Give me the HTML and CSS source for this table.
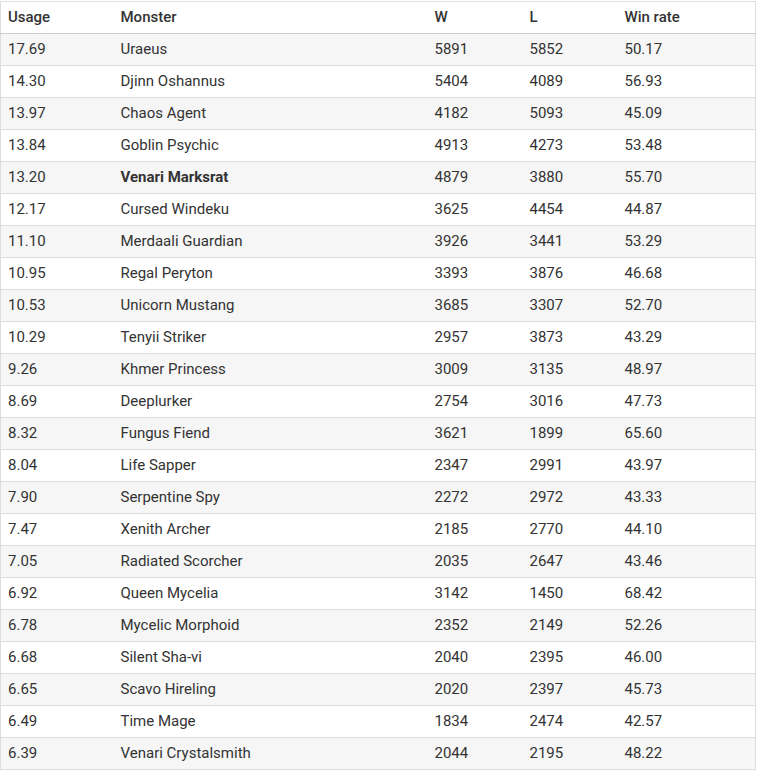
FILE: index.html
```html
<!DOCTYPE html>
<html>
<head>
<meta charset="utf-8">
<link rel="stylesheet" href="styles.css">
</head>
<body>
<table class="stats">
<colgroup>
<col class="c-usage"><col class="c-monster"><col class="c-w"><col class="c-l"><col class="c-rate">
</colgroup>
<thead>
<tr><th>Usage</th><th>Monster</th><th>W</th><th>L</th><th>Win rate</th></tr>
</thead>
<tbody>
<tr><td>17.69</td><td>Uraeus</td><td>5891</td><td>5852</td><td>50.17</td></tr>
<tr><td>14.30</td><td>Djinn Oshannus</td><td>5404</td><td>4089</td><td>56.93</td></tr>
<tr><td>13.97</td><td>Chaos Agent</td><td>4182</td><td>5093</td><td>45.09</td></tr>
<tr><td>13.84</td><td>Goblin Psychic</td><td>4913</td><td>4273</td><td>53.48</td></tr>
<tr><td>13.20</td><td class="hl">Venari Marksrat</td><td>4879</td><td>3880</td><td>55.70</td></tr>
<tr><td>12.17</td><td>Cursed Windeku</td><td>3625</td><td>4454</td><td>44.87</td></tr>
<tr><td>11.10</td><td>Merdaali Guardian</td><td>3926</td><td>3441</td><td>53.29</td></tr>
<tr><td>10.95</td><td>Regal Peryton</td><td>3393</td><td>3876</td><td>46.68</td></tr>
<tr><td>10.53</td><td>Unicorn Mustang</td><td>3685</td><td>3307</td><td>52.70</td></tr>
<tr><td>10.29</td><td>Tenyii Striker</td><td>2957</td><td>3873</td><td>43.29</td></tr>
<tr><td>9.26</td><td>Khmer Princess</td><td>3009</td><td>3135</td><td>48.97</td></tr>
<tr><td>8.69</td><td>Deeplurker</td><td>2754</td><td>3016</td><td>47.73</td></tr>
<tr><td>8.32</td><td>Fungus Fiend</td><td>3621</td><td>1899</td><td>65.60</td></tr>
<tr><td>8.04</td><td>Life Sapper</td><td>2347</td><td>2991</td><td>43.97</td></tr>
<tr><td>7.90</td><td>Serpentine Spy</td><td>2272</td><td>2972</td><td>43.33</td></tr>
<tr><td>7.47</td><td>Xenith Archer</td><td>2185</td><td>2770</td><td>44.10</td></tr>
<tr><td>7.05</td><td>Radiated Scorcher</td><td>2035</td><td>2647</td><td>43.46</td></tr>
<tr><td>6.92</td><td>Queen Mycelia</td><td>3142</td><td>1450</td><td>68.42</td></tr>
<tr><td>6.78</td><td>Mycelic Morphoid</td><td>2352</td><td>2149</td><td>52.26</td></tr>
<tr><td>6.68</td><td>Silent Sha-vi</td><td>2040</td><td>2395</td><td>46.00</td></tr>
<tr><td>6.65</td><td>Scavo Hireling</td><td>2020</td><td>2397</td><td>45.73</td></tr>
<tr><td>6.49</td><td>Time Mage</td><td>1834</td><td>2474</td><td>42.57</td></tr>
<tr><td>6.39</td><td>Venari Crystalsmith</td><td>2044</td><td>2195</td><td>48.22</td></tr>
</tbody>
</table>
</body>
</html>
```
FILE: styles.css
```css
html, body {
  margin: 0;
  padding: 0;
  background: #fff;
}
body {
  padding-top: 1px;
  font-family: Roboto, "Liberation Sans", Arial, sans-serif;
  font-size: 15px;
  color: #333;
}
.stats {
  width: 756px;
  border-collapse: collapse;
  table-layout: fixed;
  border: 1px solid #ddd;
}
.c-usage { width: 113px; }
.c-monster { width: 314px; }
.c-w { width: 95px; }
.c-l { width: 95px; }
.c-rate { width: auto; }
.stats th, .stats td {
  text-align: left;
  padding: 0 7px 2px;
  height: 29px;
  vertical-align: middle;
  line-height: 20px;
}
.stats th {
  font-weight: 500;
  color: #333;
  border-bottom: 1px solid #ccc;
}
.stats td {
  border-bottom: 1px solid #ddd;
}
.stats tbody tr:nth-child(odd) {
  background: #f6f6f6;
}
.hl {
  font-weight: 700;
}
```
